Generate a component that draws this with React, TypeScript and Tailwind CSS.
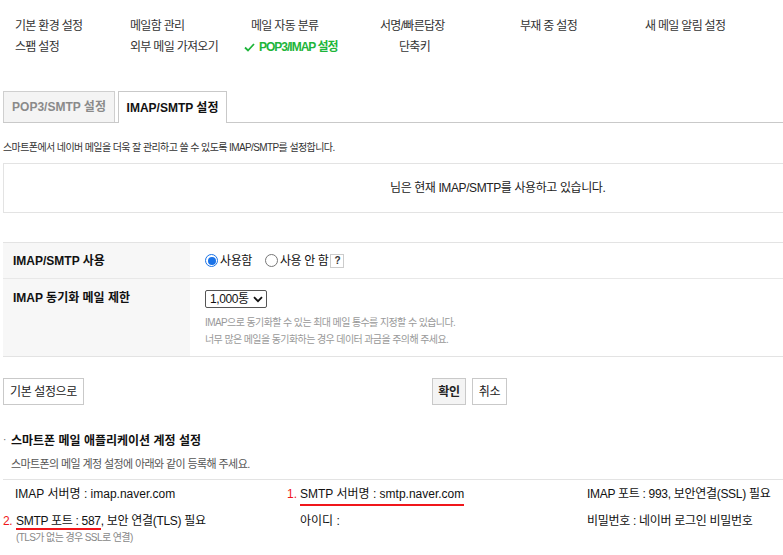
import React from "react";

const font = { fontFamily: '"Liberation Sans", "Noto Sans CJK KR", sans-serif' };

function Nav() {
  const row1 = [
    ["기본 환경 설정", "w-[115px]"],
    ["메일함 관리", "w-[121px]"],
    ["메일 자동 분류", "w-[129px]"],
    ["서명/빠른답장", "w-[140px]"],
    ["부재 중 설정", "w-[125px]"],
    ["새 메일 알림 설정", "w-[130px]"],
  ];
  return (
    <div className="pl-[15px] pt-[16px] text-[12px] leading-[20px] tracking-[-0.7px] text-[#333]">
      <div className="flex">
        {row1.map(([t, w]) => (
          <div key={t} className={w}>{t}</div>
        ))}
      </div>
      <div className="flex mt-[1px]">
        <div className="w-[115px]">스팸 설정</div>
        <div className="w-[114px]">외부 메일 가져오기</div>
        <div className="w-[155px] flex items-center font-bold text-[#1eb53a] tracking-[-1px]">
          <svg width="11" height="9" viewBox="0 0 11 9" className="mr-[4px]">
            <path d="M1 4.5 L4 7.5 L10 1" fill="none" stroke="#1eb53a" strokeWidth="1.8" />
          </svg>
          POP3/IMAP 설정
        </div>
        <div>단축키</div>
      </div>
    </div>
  );
}

function Tabs() {
  return (
    <div className="mt-[34px] ml-[3px] flex items-end border-b border-[#c9c9c9] h-[32px]">
      <div className="h-[31px] w-[112px] bg-[#f4f4f4] border border-b-0 border-[#cfcfcf] flex items-center justify-center text-[12px] font-bold text-[#8a8a8a]">
        POP3/SMTP 설정
      </div>
      <div className="ml-[3px] h-[32px] w-[109px] bg-white border border-b-0 border-[#c9c9c9] flex items-center justify-center text-[12px] font-bold text-[#111] -mb-px">
        IMAP/SMTP 설정
      </div>
    </div>
  );
}

export default function App() {
  return (
    <div className="w-[783px] h-[555px] overflow-hidden bg-white" style={font}>
      <Nav />
      <Tabs />
      <div className="ml-[3px] mt-[18px] text-[10px] leading-[14px] tracking-[-0.6px] text-[#333]">
        스마트폰에서 네이버 메일을 더욱 잘 관리하고 쓸 수 있도록 IMAP/SMTP를 설정합니다.
      </div>
      <div className="ml-[3px] mt-[8px] h-[50px] border border-r-0 border-[#e3e3e3] flex items-center pl-[386px] text-[12px] tracking-[-0.4px] text-[#222]">
        님은 현재 IMAP/SMTP를 사용하고 있습니다.
      </div>

      {/* settings table */}
      <div className="ml-[3px] mt-[29px] border-t border-[#e3e3e3] text-[12px]">
        <div className="flex border-b border-[#e8e8e8] h-[36px]">
          <div className="w-[187px] bg-[#f7f7f7] pl-[10px] flex items-center font-bold text-[#111]">
            IMAP/SMTP 사용
          </div>
          <div className="flex items-center pl-[15px] text-[#111] tracking-[-0.4px]">
            <span className="w-[13px] h-[13px] rounded-full border border-[#1a73e8] flex items-center justify-center">
              <span className="w-[8px] h-[8px] rounded-full bg-[#1a73e8]" />
            </span>
            <span className="ml-[2px]">사용함</span>
            <span className="ml-[13px] w-[13px] h-[13px] rounded-full border border-[#777] bg-white" />
            <span className="ml-[2px]">사용 안 함</span>
            <span className="ml-[2px] w-[14px] h-[14px] border border-[#ccc] flex items-center justify-center text-[10px] font-bold text-[#333] leading-none">
              ?
            </span>
          </div>
        </div>
        <div className="flex border-b border-[#e3e3e3] h-[78px]">
          <div className="w-[187px] bg-[#f7f7f7] pl-[10px] pt-[10px] font-bold text-[#111]">
            IMAP 동기화 메일 제한
          </div>
          <div className="pl-[15px] pt-[11px]">
            <div className="w-[62px] h-[18px] border border-[#555] rounded-[2px] flex items-center pl-[4px] text-[12px] tracking-[-0.4px] text-[#111]">
              1,000통
              <svg width="10" height="7" viewBox="0 0 10 7" className="ml-[4px]">
                <path d="M1 1.2 L5 5.2 L9 1.2" fill="none" stroke="#111" strokeWidth="1.8" />
              </svg>
            </div>
            <div className="mt-[6px] text-[10px] leading-[17px] tracking-[-0.6px] text-[#999]">
              <div>IMAP으로 동기화할 수 있는 최대 메일 통수를 지정할 수 있습니다.</div>
              <div>너무 많은 메일을 동기화하는 경우 데이터 과금을 주의해 주세요.</div>
            </div>
          </div>
        </div>
      </div>

      {/* buttons */}
      <div className="ml-[3px] mt-[21px] flex items-center text-[12px] tracking-[-0.4px]">
        <div className="h-[27px] w-[81px] border border-[#c9c9c9] bg-white flex items-center justify-center text-[#222]">
          기본 설정으로
        </div>
        <div className="ml-[348px] h-[27px] w-[34px] border border-[#c9c9c9] bg-[#f4f4f4] flex items-center justify-center font-bold text-[#222]">
          확인
        </div>
        <div className="ml-[6px] h-[27px] w-[35px] border border-[#c9c9c9] bg-white flex items-center justify-center text-[#222]">
          취소
        </div>
      </div>

      {/* section */}
      <div className="ml-[3px] mt-[27px] text-[12px] font-bold text-[#111] flex items-center leading-[18px]">
        <span className="text-[#666] font-normal w-[8px] text-[10px] -mt-[3px]">·</span>
        스마트폰 메일 애플리케이션 계정 설정
      </div>
      <div className="ml-[11px] mt-[6px] text-[11px] leading-[16px] tracking-[-0.6px] text-[#555]">
        스마트폰의 메일 계정 설정에 아래와 같이 등록해 주세요.
      </div>
      <div className="ml-[3px] mt-[7px] border-t border-[#e3e3e3]" />

      <div className="ml-[3px] pt-[6px] text-[12px] text-[#111] leading-[17px]">
        <div className="flex">
          <div className="w-[284px] pl-[12px]">IMAP 서버명 : imap.naver.com</div>
          <div className="w-[300px] flex">
            <span className="text-[#f0161b] w-[13px]">1.</span>
            <span className="border-b-2 border-[#f0161b] pb-[1px]">SMTP 서버명 : smtp.naver.com</span>
          </div>
          <div className="tracking-[-0.3px]">IMAP 포트 : 993, 보안연결(SSL) 필요</div>
        </div>
        <div className="flex mt-[7px]">
          <div className="w-[284px] flex tracking-[-0.3px]">
            <span className="text-[#f0161b] w-[13px]">2.</span>
            <span>
              <span className="border-b-2 border-[#f0161b]">SMTP 포트 : 587</span>, 보안 연결(TLS) 필요
            </span>
          </div>
          <div className="w-[300px] pl-[13px]">아이디 :</div>
          <div className="tracking-[-0.3px]">비밀번호 : 네이버 로그인 비밀번호</div>
        </div>
        <div className="pl-[13px] mt-[1px] text-[10px] leading-[14px] tracking-[-0.6px] text-[#888]">
          (TLS가 없는 경우 SSL로 연결)
        </div>
      </div>
    </div>
  );
}
